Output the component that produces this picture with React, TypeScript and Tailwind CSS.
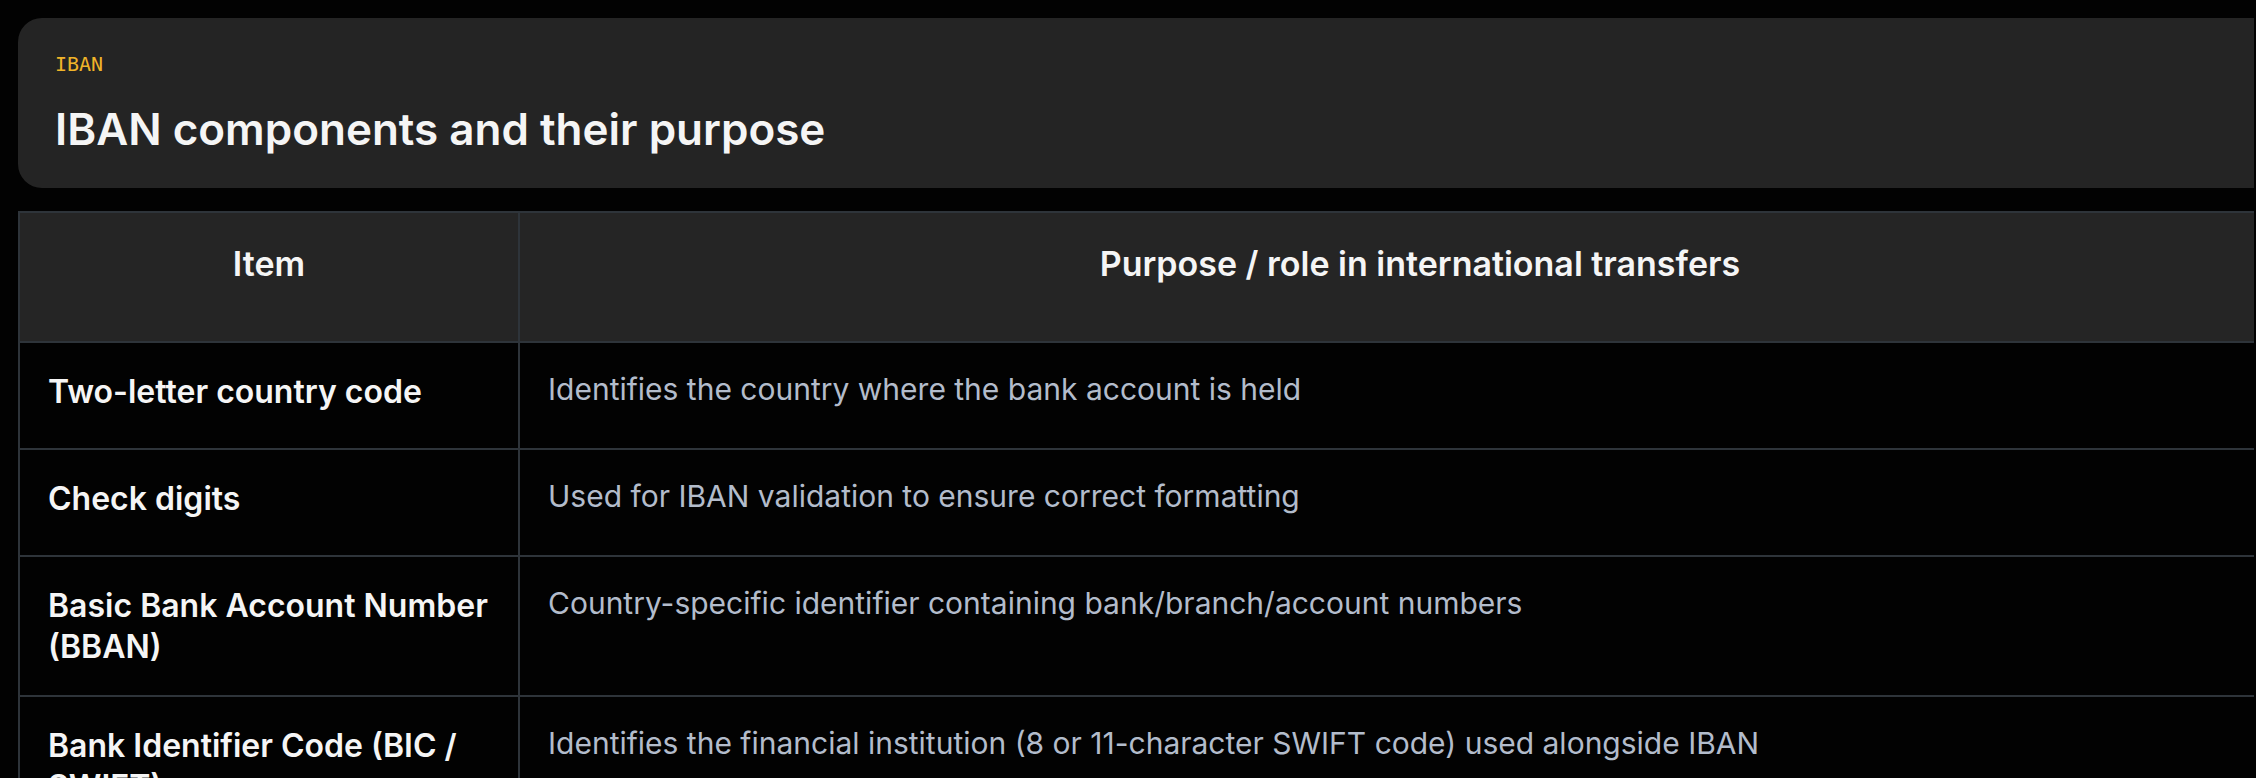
import React from "react";

const rows: { item: string; purpose: string }[] = [
  { item: "Two-letter country code", purpose: "Identifies the country where the bank account is held" },
  { item: "Check digits", purpose: "Used for IBAN validation to ensure correct formatting" },
  { item: "Basic Bank Account Number (BBAN)", purpose: "Country-specific identifier containing bank/branch/account numbers" },
  { item: "Bank Identifier Code (BIC / SWIFT)", purpose: "Identifies the financial institution (8 or 11-character SWIFT code) used alongside IBAN" },
];

export default function App() {
  return (
    <div
      className="h-[778px] w-[2256px] overflow-hidden bg-[#020202]"
      style={{ fontFamily: "Inter, 'Noto Sans', sans-serif" }}
    >
      <div className="h-full w-[2254px] overflow-hidden">
        <div className="ml-[18px] flex w-[2304px] flex-col pt-[18px]">
          <div className="rounded-3xl bg-[#242424] pb-[31px] pl-[37px] pt-[36px]">
            <div
              className="text-[20px] leading-[20px] text-[#f0b429]"
              style={{ fontFamily: "'DejaVu Sans Mono', monospace" }}
            >
              IBAN
            </div>
            <h1 className="mt-[28px] text-[44px] font-semibold leading-[55px] text-[#f5f5f5]">
              IBAN components and their purpose
            </h1>
          </div>

          <div className="mt-[23px] border-2 border-[#2e343a]">
            <div className="grid grid-cols-[500px_1fr] border-b-2 border-[#2e343a] bg-[#252525]">
              <div className="border-r-2 border-[#2e343a] pb-[57px] pt-[31px] text-center text-[34px] font-semibold leading-[40px] text-[#f5f5f5]">
                Item
              </div>
              <div className="pb-[57px] pt-[31px] text-center text-[34px] font-semibold leading-[40px] text-[#f5f5f5]">
                Purpose / role in international transfers
              </div>
            </div>
            {rows.map((r) => (
              <div
                key={r.item}
                className="grid grid-cols-[500px_1fr] border-b-2 border-[#2e343a] bg-[#020202]"
              >
                <div className="border-r-2 border-[#2e343a] pb-[28px] pl-[28px] pr-[16px] pt-[28px] text-[32px] font-semibold leading-[41px] text-[#f5f5f5]">
                  {r.item}
                </div>
                <div className="pb-[33px] pl-[28px] pr-[28px] pt-[21px] text-[30px] leading-[51px] text-[#b3bccb]">
                  {r.purpose}
                </div>
              </div>
            ))}
          </div>
        </div>
      </div>
    </div>
  );
}
